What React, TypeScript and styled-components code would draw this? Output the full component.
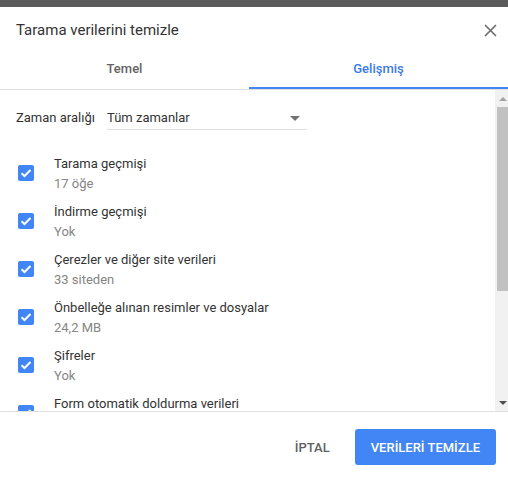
import React from "react";
import styled, { createGlobalStyle } from "styled-components";

const Global = createGlobalStyle`
  html, body { margin: 0; padding: 0; background: #ffffff; }
  body { font-family: Roboto, "Noto Sans", Arial, sans-serif; font-size: 13px; color: #333333; }
  * { box-sizing: border-box; }
`;

const Page = styled.div`
  width: 508px;
  height: 477px;
  display: flex;
  flex-direction: column;
  overflow: hidden;
`;

const Backdrop = styled.div`
  height: 7px;
  flex: none;
  background: #5b5b5b;
`;

const Dialog = styled.div`
  flex: 1;
  display: flex;
  flex-direction: column;
  background: #ffffff;
  min-height: 0;
`;

const Header = styled.div`
  height: 40px;
  flex: none;
  display: flex;
  align-items: flex-start;
  justify-content: space-between;
  padding: 13px 11px 0 16px;
`;

const Title = styled.h1`
  margin: 0;
  font-size: 15px;
  font-weight: 400;
  line-height: 20px;
  color: #333333;
`;

const CloseButton = styled.button`
  margin-top: 3px;
  width: 14px;
  height: 14px;
  padding: 0;
  border: none;
  background: none;
  display: flex;
  align-items: center;
  justify-content: center;
  cursor: pointer;
`;

const Tabs = styled.div`
  flex: none;
  display: grid;
  grid-template-columns: 249px 1fr;
  border-bottom: 1px solid #e0e0e0;
`;

const Tab = styled.div<{ $active?: boolean }>`
  height: 42px;
  padding-top: 14px;
  text-align: center;
  font-size: 13px;
  line-height: 16px;
  font-weight: 500;
  color: ${(p) => (p.$active ? "#3b7ae8" : "#646464")};
  border-bottom: 2px solid ${(p) => (p.$active ? "#4285f4" : "transparent")};
`;

const Body = styled.div`
  flex: none;
  height: 322px;
  display: flex;
  border-bottom: 1px solid #e0e0e0;
`;

const Content = styled.div`
  flex: 1;
  overflow: hidden;
  padding: 20px 0 0 16px;
`;

const RangeRow = styled.div`
  display: flex;
  align-items: flex-start;
`;

const RangeLabel = styled.span`
  width: 91px;
  flex: none;
  font-size: 13px;
  line-height: 16px;
  color: #333333;
`;

const Select = styled.div`
  width: 200px;
  display: flex;
  justify-content: space-between;
  align-items: center;
  padding: 0 7px 3px 0;
  border-bottom: 1px solid #dedede;
  font-size: 13px;
  line-height: 16px;
  color: #333333;
`;

const Caret = styled.span`
  width: 0;
  height: 0;
  border-left: 5px solid transparent;
  border-right: 5px solid transparent;
  border-top: 5px solid #737373;
`;

const List = styled.div`
  margin-top: 19px;
  display: flex;
  flex-direction: column;
`;

const Item = styled.div`
  height: 48px;
  flex: none;
  display: flex;
  align-items: flex-start;
  gap: 20px;
  padding: 6px 0 0 2px;
`;

const Box = styled.span`
  width: 16px;
  height: 16px;
  flex: none;
  margin-top: 10px;
  border-radius: 2px;
  background: #4285f4;
  display: flex;
  align-items: center;
  justify-content: center;
`;

const Texts = styled.div`
  display: flex;
  flex-direction: column;
`;

const ItemTitle = styled.span`
  font-size: 13px;
  line-height: 18px;
  color: #333333;
`;

const ItemSub = styled.span`
  margin-top: 2px;
  font-size: 13px;
  line-height: 18px;
  color: #858585;
`;

const Scrollbar = styled.div`
  width: 13px;
  flex: none;
  background: #f1f1f1;
  display: flex;
  flex-direction: column;
`;

const ScrollArrow = styled.div`
  height: 17px;
  flex: none;
  display: flex;
  align-items: center;
  justify-content: center;
  padding-left: 2px;
`;

const ArrowUp = styled.span`
  width: 0;
  height: 0;
  border-left: 4px solid transparent;
  border-right: 4px solid transparent;
  border-bottom: 4px solid #a3a3a3;
`;

const ArrowDown = styled.span`
  width: 0;
  height: 0;
  border-left: 4px solid transparent;
  border-right: 4px solid transparent;
  border-top: 4px solid #505050;
`;

const Thumb = styled.div`
  height: 184px;
  flex: none;
  margin-left: 2px;
  background: #c1c1c1;
`;

const Spacer = styled.div`
  flex: 1;
`;

const Footer = styled.div`
  flex: 1;
  display: flex;
  justify-content: flex-end;
  align-items: flex-start;
  padding: 17px 12px 0 0;
  gap: 9px;
`;

const TextButton = styled.button`
  height: 36px;
  padding: 0 16px;
  border: none;
  background: none;
  font-family: Roboto, "Noto Sans", Arial, sans-serif;
  font-size: 13px;
  font-weight: 500;
  color: #5f5f5f;
  cursor: pointer;
`;

const PrimaryButton = styled.button`
  height: 36px;
  padding: 0 16px;
  border: none;
  border-radius: 3px;
  background: #4285f4;
  font-family: Roboto, "Noto Sans", Arial, sans-serif;
  font-size: 13px;
  font-weight: 500;
  color: #ffffff;
  cursor: pointer;
`;

const items = [
  { title: "Tarama geçmişi", sub: "17 öğe" },
  { title: "İndirme geçmişi", sub: "Yok" },
  { title: "Çerezler ve diğer site verileri", sub: "33 siteden" },
  { title: "Önbelleğe alınan resimler ve dosyalar", sub: "24,2 MB" },
  { title: "Şifreler", sub: "Yok" },
  { title: "Form otomatik doldurma verileri", sub: "" },
];

const Check = () => (
  <svg width="12" height="12" viewBox="0 0 12 12">
    <polyline points="1.5,6.2 4.5,9 10.5,3" fill="none" stroke="#ffffff" strokeWidth="2" />
  </svg>
);

export default function App() {
  return (
    <Page>
      <Global />
      <Backdrop />
      <Dialog>
        <Header>
          <Title>Tarama verilerini temizle</Title>
          <CloseButton aria-label="Kapat">
            <svg width="13" height="13" viewBox="0 0 13 13">
              <path d="M1 1 L12 12 M12 1 L1 12" stroke="#6b6b6b" strokeWidth="1.6" />
            </svg>
          </CloseButton>
        </Header>
        <Tabs>
          <Tab>Temel</Tab>
          <Tab $active>Gelişmiş</Tab>
        </Tabs>
        <Body>
          <Content>
            <RangeRow>
              <RangeLabel>Zaman aralığı</RangeLabel>
              <Select>
                <span>Tüm zamanlar</span>
                <Caret />
              </Select>
            </RangeRow>
            <List>
              {items.map((it) => (
                <Item key={it.title}>
                  <Box>
                    <Check />
                  </Box>
                  <Texts>
                    <ItemTitle>{it.title}</ItemTitle>
                    <ItemSub>{it.sub || "\u00a0"}</ItemSub>
                  </Texts>
                </Item>
              ))}
            </List>
          </Content>
          <Scrollbar>
            <ScrollArrow>
              <ArrowUp />
            </ScrollArrow>
            <Thumb />
            <Spacer />
            <ScrollArrow>
              <ArrowDown />
            </ScrollArrow>
          </Scrollbar>
        </Body>
        <Footer>
          <TextButton>İPTAL</TextButton>
          <PrimaryButton>VERİLERİ TEMİZLE</PrimaryButton>
        </Footer>
      </Dialog>
    </Page>
  );
}
